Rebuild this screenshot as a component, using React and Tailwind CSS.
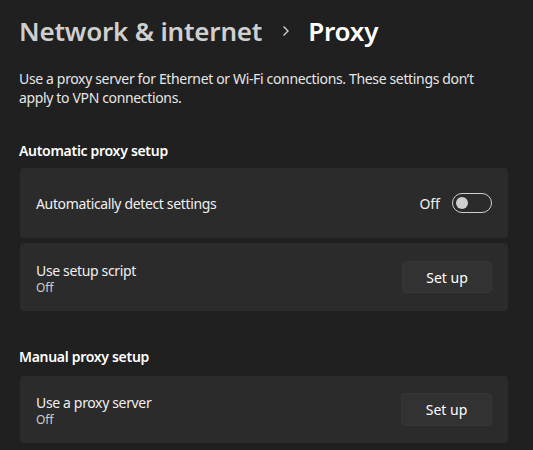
export default function App() {
  const font = { fontFamily: '"Segoe UI", "Noto Sans", "Open Sans", sans-serif' };
  return (
    <div className="w-[533px] h-[450px] overflow-hidden bg-[#202020] text-white pl-[19px] pr-[25px]" style={font}>
      <div className="pt-[10px] flex items-center h-[52px] text-[26px] font-semibold leading-[42px] tracking-[-0.2px]">
        <span className="text-[#cfcfcf]">Network &amp; internet</span>
        <span className="ml-[20px] mr-[18px] flex items-center">
          <svg width="8" height="12" viewBox="0 0 8 12"><path d="M1.5 1.5 L6 6 L1.5 10.5" fill="none" stroke="#d0d0d0" strokeWidth="1.4" /></svg>
        </span>
        <span className="text-white">Proxy</span>
      </div>
      <p className="mt-[17px] text-[14px] leading-[19px] tracking-[-0.35px] text-[#e6e6e6]">
        Use a proxy server for Ethernet or Wi-Fi connections. These settings don’t<br />apply to VPN connections.
      </p>
      <div className="mt-[34px] text-[14px] font-semibold leading-[20px] tracking-[-0.3px]">Automatic proxy setup</div>
      <div className="mt-[7px] ml-px h-[70px] rounded-[4px] bg-[#2b2b2b] flex items-center pl-[16px] pr-[16px]">
        <span className="text-[14px] tracking-[-0.35px] text-[#f0f0f0] flex-1">Automatically detect settings</span>
        <span className="text-[14px] text-[#f0f0f0] mr-[12px]">Off</span>
        <div className="w-[40px] h-[20px] rounded-full border border-[#cfcfcf] flex items-center pl-[3px]">
          <div className="w-[12px] h-[12px] rounded-full bg-[#d0d0d0]" />
        </div>
      </div>
      <div className="mt-[5px] ml-px h-[68px] rounded-[4px] bg-[#2b2b2b] flex items-center pl-[16px] pr-[16px]">
        <div className="flex-1 flex flex-col pt-[2px]">
          <span className="text-[14px] leading-[19px] tracking-[-0.35px] text-[#f0f0f0]">Use setup script</span>
          <span className="text-[12px] leading-[16px] text-[#cfcfcf]">Off</span>
        </div>
        <button className="w-[90px] h-[32px] rounded-[4px] bg-[#323232] border border-[#373737] text-[14px] text-white">Set up</button>
      </div>
      <div className="mt-[36px] text-[14px] font-semibold leading-[20px] tracking-[-0.3px]">Manual proxy setup</div>
      <div className="mt-[9px] ml-px h-[67px] rounded-[4px] bg-[#2b2b2b] flex items-center pl-[16px] pr-[16px]">
        <div className="flex-1 flex flex-col pt-[2px]">
          <span className="text-[14px] leading-[19px] tracking-[-0.35px] text-[#f0f0f0]">Use a proxy server</span>
          <span className="text-[12px] leading-[16px] text-[#cfcfcf]">Off</span>
        </div>
        <button className="w-[91px] h-[33px] rounded-[4px] bg-[#323232] border border-[#373737] text-[14px] text-white">Set up</button>
      </div>
    </div>
  );
}
